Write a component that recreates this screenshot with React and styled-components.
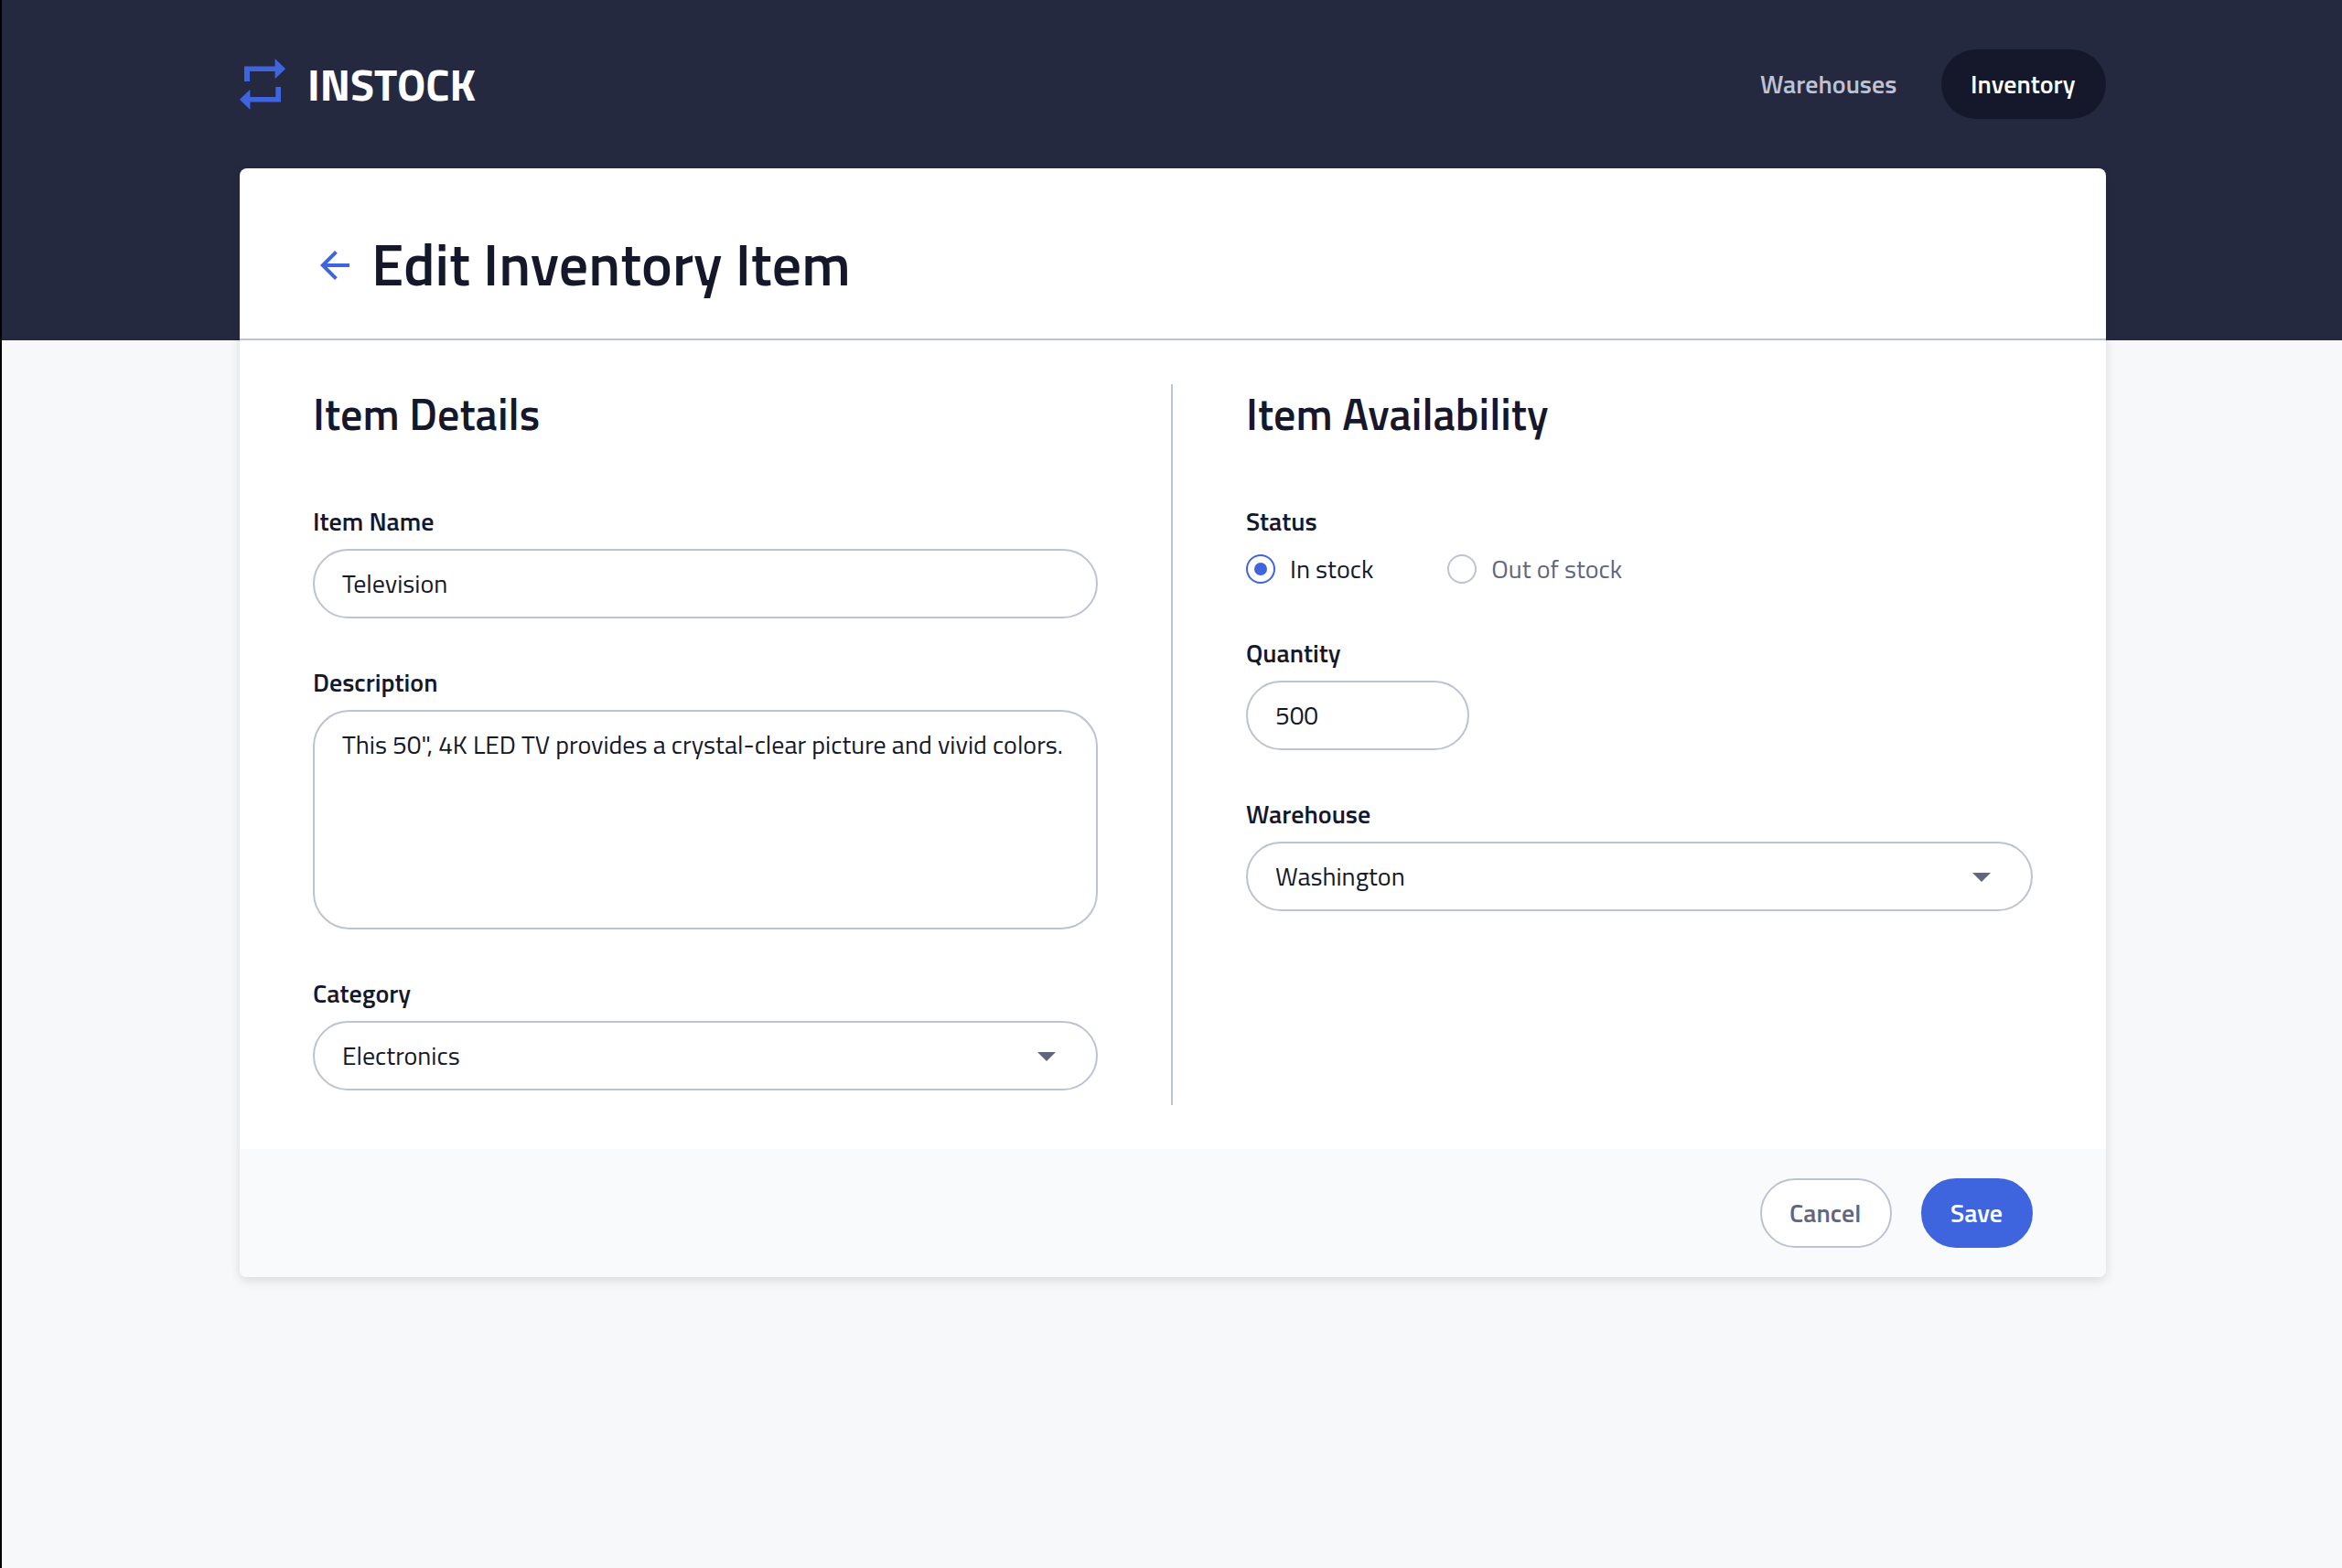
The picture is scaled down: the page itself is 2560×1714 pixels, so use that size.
import React, { useState } from "react";
import styled, { createGlobalStyle, ThemeProvider } from "styled-components";

const theme = {
  graphite: "#25293f",
  ink: "#15182a",
  indigo: "#3e64de",
  slate: "#60667f",
  cloud: "#bec2d5",
  mist: "#f7f8fa",
  footer: "#f9fafc",
  white: "#ffffff",
};

const GlobalStyle = createGlobalStyle`
  *, *::before, *::after { box-sizing: border-box; }
  body {
    margin: 0;
    font-family: "Titillium Web", Roboto, "Open Sans", sans-serif;
    font-size: 28px;
    line-height: 44px;
    color: ${theme.ink};
    background: ${theme.mist};
  }
  h1, h2 { margin: 0; font-weight: 600; }
  button { font: inherit; color: inherit; cursor: pointer; }
  svg { display: block; flex: none; }
`;

const Page = styled.div`
  min-height: 100vh;
  border-left: 2px solid #000;
  background: ${({ theme }) => theme.mist};
`;

const Header = styled.header`
  height: 372px;
  padding: 54px 0 0 260px;
  background: ${({ theme }) => theme.graphite};
`;

const HeaderBar = styled.div`
  display: flex;
  align-items: center;
  justify-content: space-between;
  width: 2040px;
  height: 76px;
`;

const Brand = styled.a`
  display: flex;
  align-items: center;
  gap: 24px;
  font-size: 48px;
  font-weight: 700;
  line-height: 74px;
  color: ${({ theme }) => theme.white};
`;

const BrandName = styled.span`
  padding-top: 2px;
`;

const Nav = styled.nav`
  display: flex;
  align-items: center;
  gap: 16px;
`;

const NavLink = styled.a`
  width: ${({ $width }) => $width}px;
  padding: 16px 32px;
  border-radius: 40px;
  font-weight: 600;
  white-space: nowrap;
  color: ${({ $active, theme }) => ($active ? theme.white : theme.cloud)};
  background: ${({ $active, theme }) => ($active ? theme.ink : "transparent")};
`;

const Card = styled.main`
  position: relative;
  width: 2040px;
  margin: -188px 0 0 260px;
  border-radius: 8px;
  background: ${({ theme }) => theme.white};
  box-shadow: 0 4px 12px rgba(0, 0, 0, 0.12);
`;

const CardHeader = styled.div`
  display: flex;
  gap: 16px;
  height: 188px;
  padding: 64px 80px 0;
  border-bottom: 2px solid ${({ theme }) => theme.cloud};
`;

const BackLink = styled.a`
  padding-top: 18px;
  color: ${({ theme }) => theme.indigo};
`;

const Title = styled.h1`
  font-size: 64px;
  line-height: 80px;
`;

const Columns = styled.form`
  display: grid;
  grid-template-columns: 1fr 1fr;
  padding: 48px 0;
`;

const Column = styled.section`
  display: flex;
  flex-direction: column;
  gap: 48px;
  padding: 0 80px 16px;
  border-right: ${({ $divided, theme }) =>
    $divided ? `2px solid ${theme.cloud}` : "none"};
`;

const SectionTitle = styled.h2`
  margin-bottom: 16px;
  padding-top: 1px;
  height: 64px;
  font-size: 48px;
  line-height: 64px;
`;

const FieldGroup = styled.div`
  display: flex;
  flex-direction: column;
  gap: 8px;
`;

const Label = styled.div`
  font-weight: 600;
`;

const TextBox = styled.div`
  width: ${({ $width }) => $width || "100%"};
  height: ${({ $height }) => $height || "76px"};
  padding: 14px 30px;
  border: 2px solid ${({ theme }) => theme.cloud};
  border-radius: 40px;
  background: ${({ theme }) => theme.white};
  white-space: nowrap;
  outline: none;
`;

const SelectBox = styled.button`
  display: flex;
  align-items: center;
  justify-content: space-between;
  width: 100%;
  height: 76px;
  padding: 0 30px;
  border: 2px solid ${({ theme }) => theme.cloud};
  border-radius: 40px;
  background: ${({ theme }) => theme.white};
`;

const Caret = styled.svg`
  fill: ${({ theme }) => theme.slate};
`;

const RadioGroup = styled.div`
  display: flex;
  gap: 81px;
`;

const RadioOption = styled.div`
  display: flex;
  align-items: center;
  gap: 16px;
  color: ${({ $checked, theme }) => ($checked ? theme.ink : theme.slate)};
`;

const RadioCircle = styled.span`
  display: grid;
  place-items: center;
  width: 32px;
  height: 32px;
  border: 2px solid
    ${({ $checked, theme }) => ($checked ? theme.indigo : theme.cloud)};
  border-radius: 50%;
`;

const RadioDot = styled.span`
  width: 14px;
  height: 14px;
  border-radius: 50%;
  background: ${({ theme }) => theme.indigo};
`;

const CardFooter = styled.footer`
  display: flex;
  justify-content: flex-end;
  gap: 32px;
  padding: 32px 80px;
  border-radius: 0 0 8px 8px;
  background: ${({ theme }) => theme.footer};
`;

const Button = styled.button`
  width: ${({ $width }) => $width}px;
  height: 76px;
  padding: 0 0 0 30px;
  border: 2px solid
    ${({ $primary, theme }) => ($primary ? theme.indigo : theme.cloud)};
  border-radius: 40px;
  font-weight: 600;
  text-align: left;
  color: ${({ $primary, theme }) => ($primary ? theme.white : theme.slate)};
  background: ${({ $primary, theme }) =>
    $primary ? theme.indigo : theme.white};
`;

function Logo() {
  return (
    <svg width="50" height="56" viewBox="0 0 50 56" fill={theme.indigo}>
      <path d="M5 8.4H38.6V0L50 11.2L38.6 22.2V14H11V25H5Z" />
      <path d="M45 47.6H11.4V56L0 44.8L11.4 33.8V42H39.3V31H45Z" />
    </svg>
  );
}

function BackArrow() {
  return (
    <svg width="48" height="48" viewBox="0 0 24 24" fill="currentColor">
      <path d="M20 11H7.83l5.59-5.59L12 4l-8 8 8 8 1.41-1.41L7.83 13H20v-2z" />
    </svg>
  );
}

function Field({ label, children }) {
  return (
    <FieldGroup>
      <Label>{label}</Label>
      {children}
    </FieldGroup>
  );
}

function Select({ value }) {
  return (
    <SelectBox type="button">
      <span>{value}</span>
      <Caret width="48" height="48" viewBox="0 0 24 24">
        <path d="M7 10l5 5 5-5z" />
      </Caret>
    </SelectBox>
  );
}

function Radio({ label, checked, onSelect }) {
  return (
    <RadioOption
      role="radio"
      aria-checked={checked}
      $checked={checked}
      onClick={onSelect}
    >
      <RadioCircle $checked={checked}>{checked && <RadioDot />}</RadioCircle>
      <span>{label}</span>
    </RadioOption>
  );
}

export default function App() {
  const [status, setStatus] = useState("In stock");

  return (
    <ThemeProvider theme={theme}>
      <GlobalStyle />
      <Page>
        <Header>
          <HeaderBar>
            <Brand>
              <Logo />
              <BrandName>INSTOCK</BrandName>
            </Brand>
            <Nav>
              <NavLink $width={214}>Warehouses</NavLink>
              <NavLink $width={180} $active>
                Inventory
              </NavLink>
            </Nav>
          </HeaderBar>
        </Header>

        <Card>
          <CardHeader>
            <BackLink>
              <BackArrow />
            </BackLink>
            <Title>Edit Inventory Item</Title>
          </CardHeader>

          <Columns>
            <Column $divided>
              <SectionTitle>Item Details</SectionTitle>
              <Field label="Item Name">
                <TextBox role="textbox">Television</TextBox>
              </Field>
              <Field label="Description">
                <TextBox role="textbox" $height="240px">
                  This 50", 4K LED TV provides a crystal-clear picture and vivid
                  colors.
                </TextBox>
              </Field>
              <Field label="Category">
                <Select value="Electronics" />
              </Field>
            </Column>

            <Column>
              <SectionTitle>Item Availability</SectionTitle>
              <Field label="Status">
                <RadioGroup role="radiogroup">
                  {["In stock", "Out of stock"].map((option) => (
                    <Radio
                      key={option}
                      label={option}
                      checked={status === option}
                      onSelect={() => setStatus(option)}
                    />
                  ))}
                </RadioGroup>
              </Field>
              <Field label="Quantity">
                <TextBox role="textbox" $width="244px">
                  500
                </TextBox>
              </Field>
              <Field label="Warehouse">
                <Select value="Washington" />
              </Field>
            </Column>
          </Columns>

          <CardFooter>
            <Button $width={144}>Cancel</Button>
            <Button $width={122} $primary>
              Save
            </Button>
          </CardFooter>
        </Card>
      </Page>
    </ThemeProvider>
  );
}
